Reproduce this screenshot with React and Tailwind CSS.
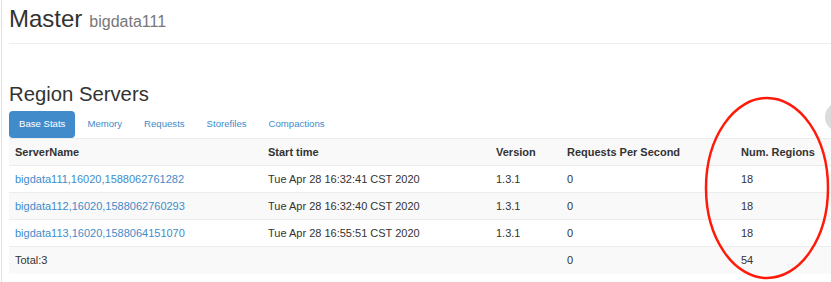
import React from 'react';

const tabs = ['Base Stats', 'Memory', 'Requests', 'Storefiles', 'Compactions'];

const servers = [
  { name: 'bigdata111,16020,1588062761282', start: 'Tue Apr 28 16:32:41 CST 2020' },
  { name: 'bigdata112,16020,1588062760293', start: 'Tue Apr 28 16:32:40 CST 2020' },
  { name: 'bigdata113,16020,1588064151070', start: 'Tue Apr 28 16:55:51 CST 2020' },
];

const App = () => {
  return (
    <div className="relative w-[831px] h-[282px] overflow-hidden bg-white font-['Liberation_Sans',Arial,sans-serif] text-[#333]">
      <div className="ml-px h-full border-l border-[#e3e3e3] pl-[7px]">
        <div className="flex items-baseline gap-[7px] pt-[4px] h-[43px]">
          <h1 className="text-[24px] leading-[30px] text-[#333]">Master</h1>
          <small className="text-[16px] text-[#777]">bigdata111</small>
        </div>
        <div className="border-t border-[#eee]" />

        <h2 className="mt-[38px] text-[20.3px] leading-[24px] text-[#333]">Region Servers</h2>

        <ul className="mt-[5px] flex gap-[2px] text-[9.6px]">
          {tabs.map((t, i) => (
            <li
              key={t}
              className={
                i === 0
                  ? 'h-[27px] px-[10px] flex items-center rounded-[4px] bg-[#428bca] text-white'
                  : 'h-[27px] px-[10px] flex items-center text-[#428bca]'
              }
            >
              {t}
            </li>
          ))}
        </ul>

        <table className="w-[830px] table-fixed border-collapse text-[11px]">
          <colgroup>
            <col className="w-[253px]" />
            <col className="w-[228px]" />
            <col className="w-[71px]" />
            <col className="w-[174px]" />
            <col />
          </colgroup>
          <tbody>
            <tr className="h-[27px] bg-[#f9f9f9] border-t border-[#ececec] font-bold text-left">
              <th className="px-[6px]">ServerName</th>
              <th className="px-[6px]">Start time</th>
              <th className="px-[6px]">Version</th>
              <th className="px-[6px]">Requests Per Second</th>
              <th className="px-[6px]">Num. Regions</th>
            </tr>
            {servers.map((s, i) => (
              <tr
                key={s.name}
                className={
                  i % 2 === 1
                    ? 'h-[27px] bg-[#f9f9f9] border-t border-[#ececec]'
                    : 'h-[27px] bg-white border-t border-[#ececec]'
                }
              >
                <td className="px-[6px] text-[#428bca]">{s.name}</td>
                <td className="px-[6px]">{s.start}</td>
                <td className="px-[6px]">1.3.1</td>
                <td className="px-[6px]">0</td>
                <td className="px-[6px]">18</td>
              </tr>
            ))}
            <tr className="h-[27px] bg-[#f9f9f9] border-t border-[#ececec]">
              <td className="px-[6px]">Total:3</td>
              <td className="px-[6px]"></td>
              <td className="px-[6px]"></td>
              <td className="px-[6px]">0</td>
              <td className="px-[6px]">54</td>
            </tr>
          </tbody>
        </table>
      </div>

      {/* grey button peeking from the right edge */}
      <div className="absolute left-[825px] top-[102px] w-[30px] h-[30px] rounded-full bg-[#dcdcdc]" />

      {/* red annotation ellipse */}
      <svg className="absolute left-0 top-0 pointer-events-none" width="831" height="282">
        <ellipse cx="767" cy="188" rx="61" ry="90" fill="none" stroke="#ff1a0a" strokeWidth="2.5" />
      </svg>
    </div>
  );
};

export default App;
